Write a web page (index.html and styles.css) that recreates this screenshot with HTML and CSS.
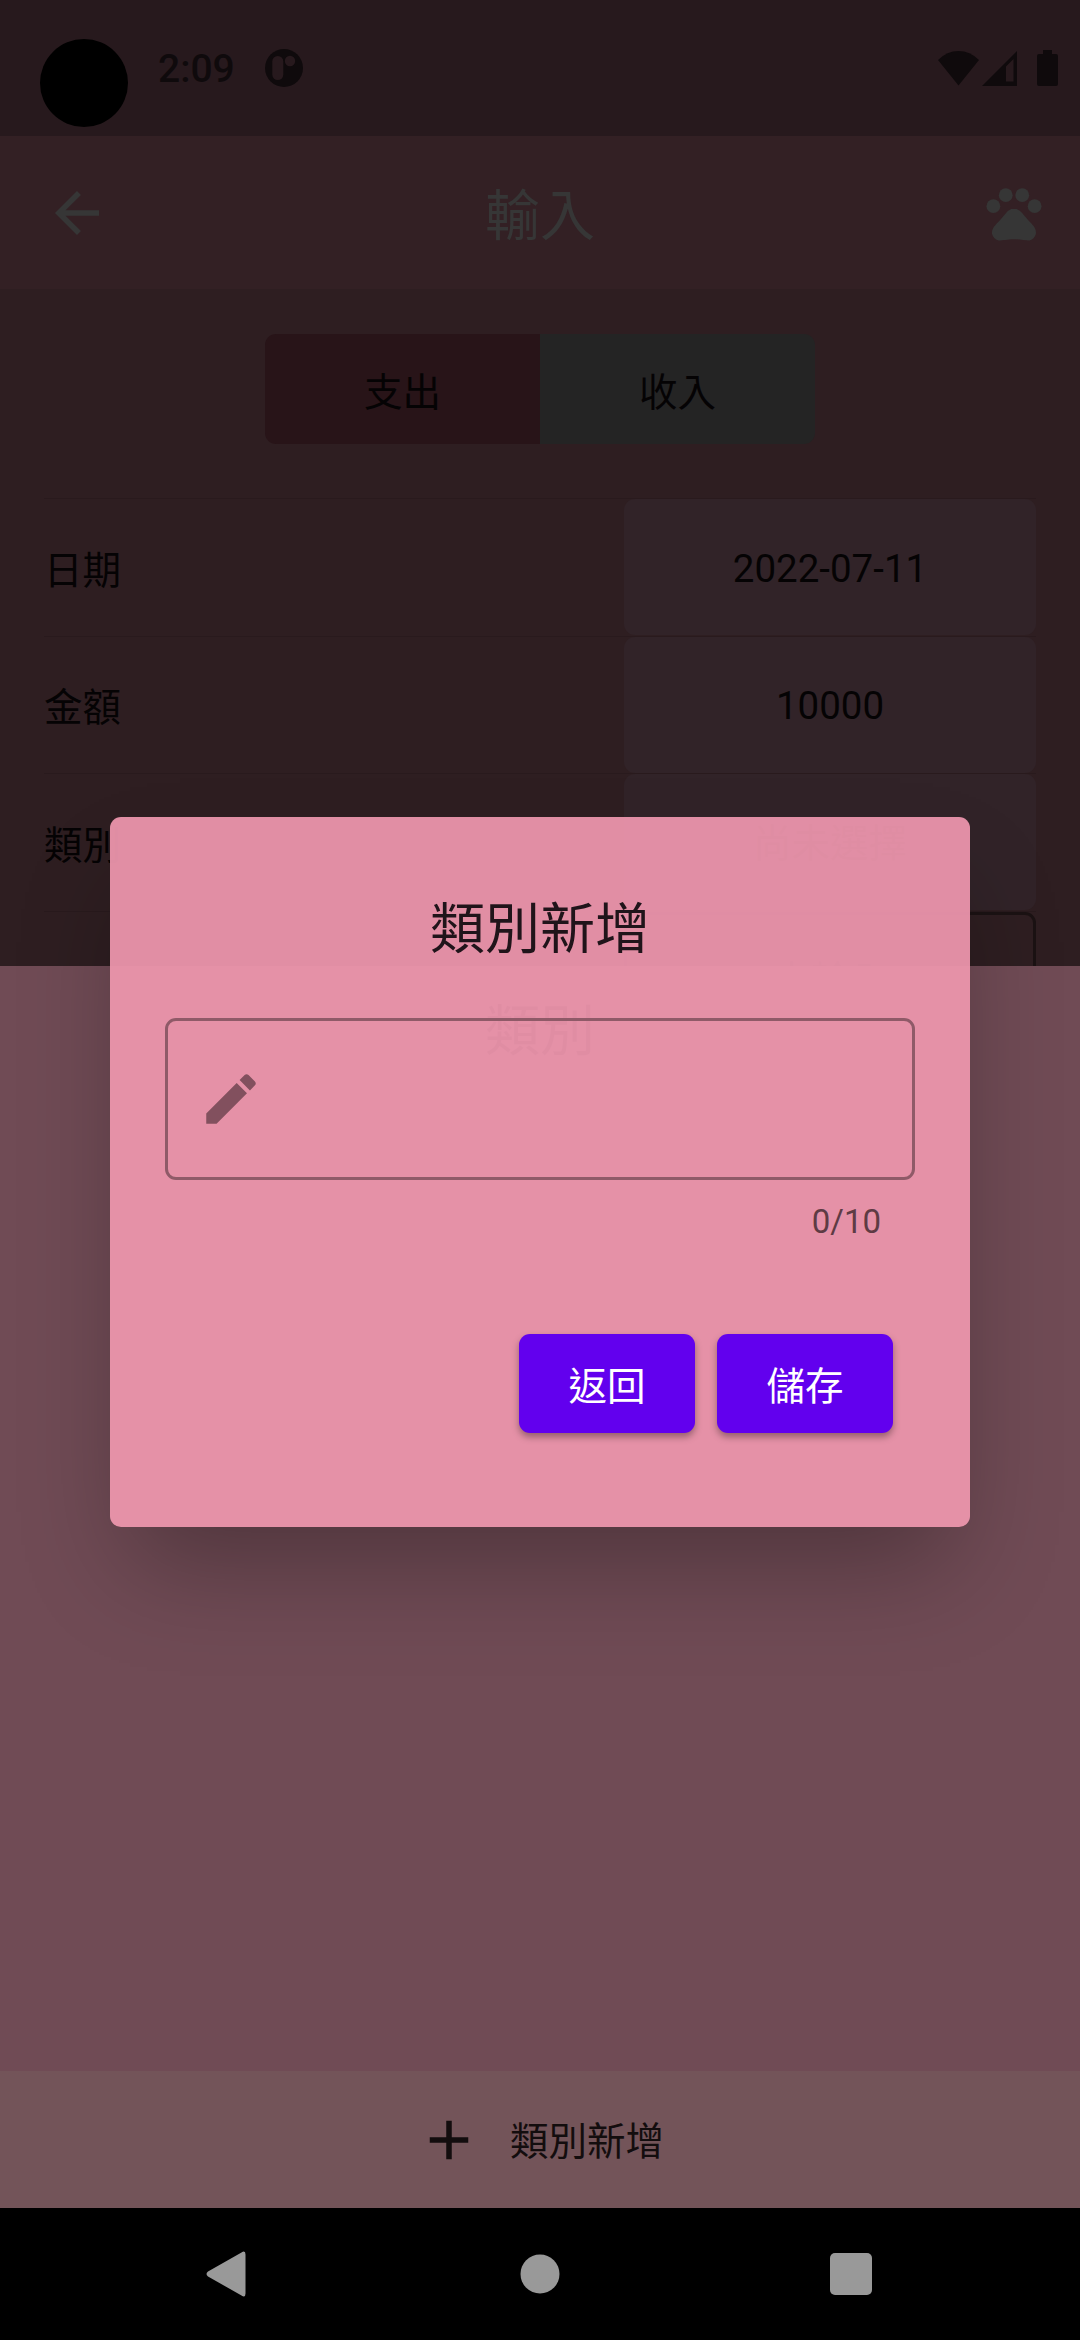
FILE: index.html
```html
<!DOCTYPE html>
<html lang="zh-Hant">
<head>
<meta charset="utf-8">
<title>輸入</title>
<link rel="stylesheet" href="styles.css">
</head>
<body>
<div class="screen">
  <header class="status-bar">
    <span class="camera"></span>
    <span class="clock">2:09</span>
    <svg class="app-badge" width="38" height="38" viewBox="0 0 38 38"><circle cx="19" cy="19" r="19" fill="#0f0a0c"/><rect x="7.3" y="7" width="11" height="24" rx="5.5" fill="#27191d"/><circle cx="25" cy="12" r="5.2" fill="#27191d"/></svg>
    <span class="indicators">
      <svg width="41" height="36" viewBox="0 0 41 36"><path d="M0 10Q9 1 20.500 1T41 10L20.500 35.500Z"/></svg>
      <svg class="signal" width="35" height="36" viewBox="0 0 35 36"><path fill-rule="evenodd" d="M35 1V36H0ZM31.500 9L24 16.500V31.500H31.500Z"/></svg>
      <svg class="battery" width="21" height="36" viewBox="0 0 21 36"><path d="M6 0H15V4H19Q21 4 21 6V34Q21 36 19 36H2Q0 36 0 34V6Q0 4 2 4H6Z"/></svg>
    </span>
  </header>

  <nav class="app-bar">
    <svg class="icon" viewBox="0 0 24 24"><path d="M20 11H7.830l5.590-5.590L12 4l-8 8 8 8 1.410-1.410L7.830 13H20v-2z"/></svg>
    <h1 class="app-title">輸入</h1>
    <svg class="icon" viewBox="0 0 24 24"><circle cx="4.500" cy="9.500" r="2.500"/><circle cx="9" cy="5.500" r="2.500"/><circle cx="15" cy="5.500" r="2.500"/><circle cx="19.500" cy="9.500" r="2.500"/><path d="M17.340 14.860c-.870-1.020-1.600-1.890-2.480-2.910-.460-.540-1.050-1.080-1.750-1.320-.110-.040-.220-.070-.330-.090-.250-.040-.520-.040-.780-.040s-.530 0-.790.050c-.110.020-.220.050-.330.090-.700.240-1.280.780-1.750 1.320-.870 1.020-1.600 1.890-2.480 2.910-1.310 1.310-2.920 2.760-2.620 4.790.290 1.020 1.020 2.030 2.330 2.320.730.150 3.060-.440 5.540-.440h.180c2.480 0 4.810.580 5.540.440 1.310-.290 2.040-1.310 2.330-2.320.310-2.040-1.300-3.490-2.610-4.800z"/></svg>
  </nav>

  <main class="form">
    <div class="toggle">
      <div class="toggle-item active">支出</div>
      <div class="toggle-item">收入</div>
    </div>
    <div class="rows">
      <div class="row"><span class="label">日期</span><span class="value">2022-07-11</span></div>
      <div class="row"><span class="label">金額</span><span class="value">10000</span></div>
      <div class="row"><span class="label">類別</span><span class="value">尚未選擇</span></div>
      <div class="row"><span class="label"></span><span class="value outlined">未輸入</span></div>
    </div>
  </main>

  <footer class="nav-bar">
    <svg width="40" height="46" viewBox="0 0 40 46"><path d="M35.500 1.500Q39.500-1 39.500 3.500V42.500Q39.500 47 35.500 44.500L2 25.500Q-1 23 2 20.500Z"/></svg>
    <svg class="home" width="40" height="40" viewBox="0 0 40 40"><circle cx="20" cy="20" r="19.500"/></svg>
    <svg width="42" height="42" viewBox="0 0 42 42"><rect width="42" height="42" rx="5"/></svg>
  </footer>

  <section class="sheet">
    <h2 class="sheet-title">類別</h2>
    <div class="add-row">
      <svg class="icon" viewBox="0 0 24 24"><path d="M19 13h-6v6h-2v-6H5v-2h6V5h2v6h6v2z"/></svg>
      <span class="add-label">類別新增</span>
    </div>
  </section>

  <section class="dialog">
    <h2 class="dialog-title">類別新增</h2>
    <div class="field">
      <svg class="icon" viewBox="0 0 24 24"><path d="M3 17.250V21h3.750L17.810 9.940l-3.750-3.750L3 17.250zM20.710 7.040c.390-.390.390-1.020 0-1.410l-2.340-2.340c-.390-.390-1.020-.390-1.410 0l-1.830 1.830 3.750 3.750 1.830-1.830z"/></svg>
    </div>
    <div class="counter">0/10</div>
    <div class="actions">
      <button class="button">返回</button>
      <button class="button">儲存</button>
    </div>
  </section>
</div>
</body>
</html>
```
FILE: styles.css
```css
* {
  box-sizing: border-box;
}

body {
  margin: 0;
  background: #000;
  font-family: Roboto, "Noto Sans CJK TC", sans-serif;
  font-size: 38.5px;
  line-height: 1.2;
  color: #050304;
}

h1,
h2 {
  margin: 0;
  font-size: 55px;
  font-weight: 400;
  line-height: 64px;
}

.screen {
  position: relative;
  display: flex;
  flex-direction: column;
  width: 1080px;
  height: 2340px;
  overflow: hidden;
  background: #2e1e21;
}

.icon {
  flex: none;
  width: 66px;
  height: 66px;
  fill: currentColor;
}

.status-bar {
  display: flex;
  height: 136px;
  padding: 39px 22px 0 40px;
  background: #27191d;
  color: #0f0a0c;
}

.camera {
  width: 88px;
  height: 88px;
  border-radius: 50%;
  background: #000;
}

.clock {
  width: 78px;
  margin: 7px 0 0 30px;
  font-size: 39px;
  font-weight: 500;
  line-height: 46px;
}

.app-badge {
  margin: 10px 0 0 28.5px;
}

.indicators {
  display: flex;
  margin: 11px 0 0 auto;
  fill: #0f0a0c;
}

.signal {
  margin-left: 3px;
}

.battery {
  margin-left: 20px;
}

.app-bar {
  display: flex;
  align-items: center;
  justify-content: space-between;
  height: 153px;
  padding: 0 33px 0 44px;
  background: #332024;
  color: #363636;
}

.app-title {
  padding: 7px 11px 0 0;
}

.form {
  display: flex;
  flex: 1;
  flex-direction: column;
  padding: 45px 44px 0 44px;
}

.toggle {
  display: flex;
  align-self: center;
  width: 550px;
  height: 110px;
  overflow: hidden;
  border-radius: 11px;
}

.toggle-item {
  display: flex;
  flex: 1;
  align-items: center;
  justify-content: center;
  padding-top: 9px;
  background: #242424;
}

.toggle-item.active {
  background: #281418;
}

.rows {
  margin-top: 54px;
}

.row {
  display: flex;
  align-items: center;
  justify-content: space-between;
  height: 137.5px;
  border-top: 1.5px solid #291a1d;
}

.label {
  padding-top: 7px;
}

.value {
  display: flex;
  align-items: center;
  justify-content: center;
  width: 412px;
  height: 136px;
  padding-top: 3px;
  border-radius: 11px;
  background: #312328;
}

.value.outlined {
  border: 3px solid #1b1213;
  background: none;
}

.nav-bar {
  display: flex;
  align-items: center;
  justify-content: space-between;
  height: 132px;
  padding: 0 208px 0 206px;
  background: #000;
  fill: #999;
}

.home {
  margin-left: 4px;
}

.sheet {
  position: absolute;
  top: 966px;
  left: 0;
  display: flex;
  flex-direction: column;
  justify-content: space-between;
  width: 1080px;
  height: 1242px;
  padding-top: 33px;
  background: #704b55;
  color: #130d0e;
}

.sheet-title {
  text-align: center;
}

.add-row {
  display: flex;
  align-items: center;
  justify-content: center;
  gap: 28px;
  height: 137px;
  background: #735459;
}

.add-label {
  padding-top: 6px;
}

.dialog {
  position: absolute;
  top: 817px;
  left: 110px;
  width: 860px;
  height: 710px;
  padding: 80px 55px 0;
  border-radius: 11px;
  background: rgba(235, 149, 172, 0.95);
  box-shadow: 0 55px 100px -20px rgba(0, 0, 0, 0.3);
  color: #20141a;
}

.dialog-title {
  text-align: center;
}

.field {
  display: flex;
  align-items: center;
  height: 162px;
  margin-top: 57px;
  padding-left: 30px;
  border: 3px solid #8f5a68;
  border-radius: 11px;
  color: #82505e;
}

.counter {
  margin-top: 22px;
  padding-right: 34px;
  font-size: 33px;
  line-height: 40px;
  text-align: right;
  color: #5e3b44;
}

.actions {
  display: flex;
  justify-content: flex-end;
  gap: 22px;
  margin-top: 92px;
  padding-right: 22px;
}

.button {
  width: 176px;
  height: 99px;
  padding: 7px 0 0;
  border: 0;
  border-radius: 11px;
  background: #6200ee;
  box-shadow: 0 4px 7px rgba(0, 0, 0, 0.35);
  color: #fff;
  font: inherit;
}
```
